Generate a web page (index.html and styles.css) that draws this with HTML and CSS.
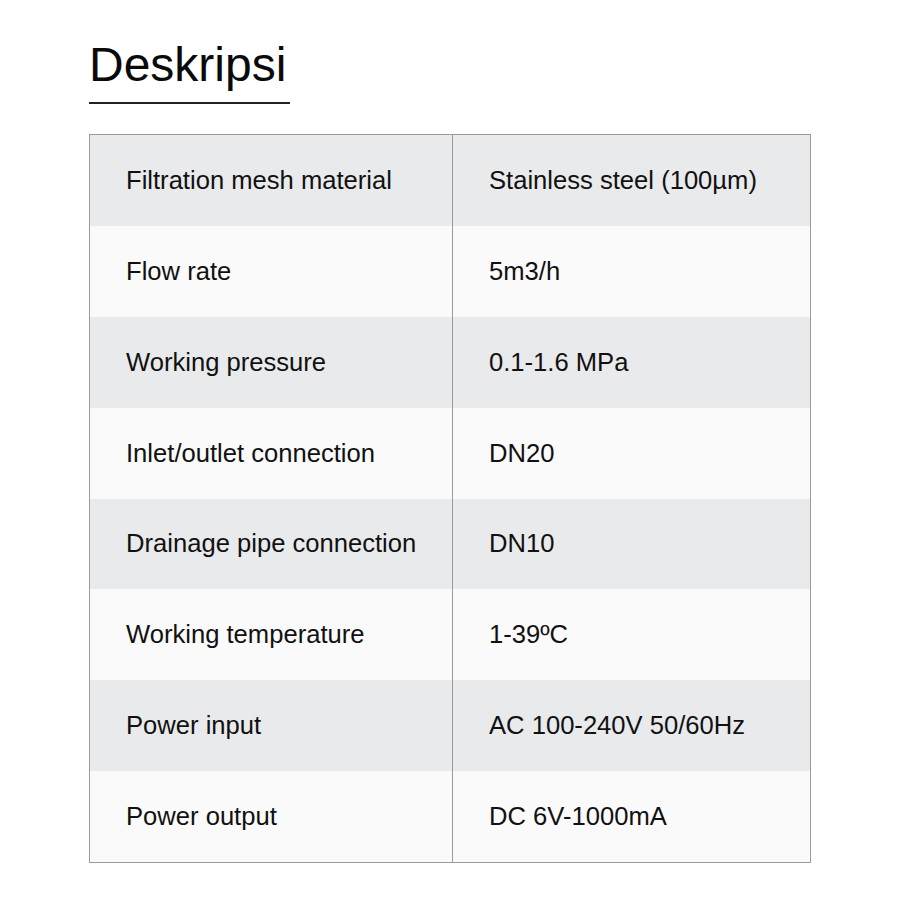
FILE: index.html
```html
<!DOCTYPE html>
<html lang="id">
<head>
<meta charset="utf-8">
<title>Deskripsi</title>
<link rel="stylesheet" href="styles.css">
</head>
<body>
<main class="page">
  <h1 class="title">Deskripsi</h1>
  <div class="rule"></div>
  <div class="spec">
    <div class="row alt"><div class="key">Filtration mesh material</div><div class="val">Stainless steel (100µm)</div></div>
    <div class="row"><div class="key">Flow rate</div><div class="val">5m3/h</div></div>
    <div class="row alt"><div class="key">Working pressure</div><div class="val">0.1-1.6 MPa</div></div>
    <div class="row"><div class="key">Inlet/outlet connection</div><div class="val">DN20</div></div>
    <div class="row alt"><div class="key">Drainage pipe connection</div><div class="val">DN10</div></div>
    <div class="row"><div class="key">Working temperature</div><div class="val">1-39ºC</div></div>
    <div class="row alt"><div class="key">Power input</div><div class="val">AC 100-240V 50/60Hz</div></div>
    <div class="row"><div class="key">Power output</div><div class="val">DC 6V-1000mA</div></div>
  </div>
</main>
</body>
</html>
```
FILE: styles.css
```css
html, body {
  margin: 0;
  padding: 0;
  background: #ffffff;
}
body {
  font-family: "Liberation Sans", Arial, Helvetica, sans-serif;
  color: #111111;
}
.page {
  padding: 37px 0 0 89px;
  width: 722px;
}
.title {
  margin: 0;
  font-size: 48px;
  line-height: 56px;
  font-weight: 400;
  color: #0a0a0a;
}
.rule {
  margin-top: 9px;
  width: 201px;
  height: 2px;
  background: #222222;
}
.spec {
  margin-top: 30px;
  border: 1px solid #9b9b9b;
  display: flex;
  flex-direction: column;
}
.row {
  display: grid;
  grid-template-columns: 363px 1fr;
  height: 90.875px;
  background: #fafafa;
}
.row.alt {
  background: #e9eaec;
}
.key, .val {
  display: flex;
  align-items: center;
  padding-left: 36px;
  font-size: 25.6px;
  color: #111111;
}
.key {
  border-right: 1px solid #9b9b9b;
}
```
